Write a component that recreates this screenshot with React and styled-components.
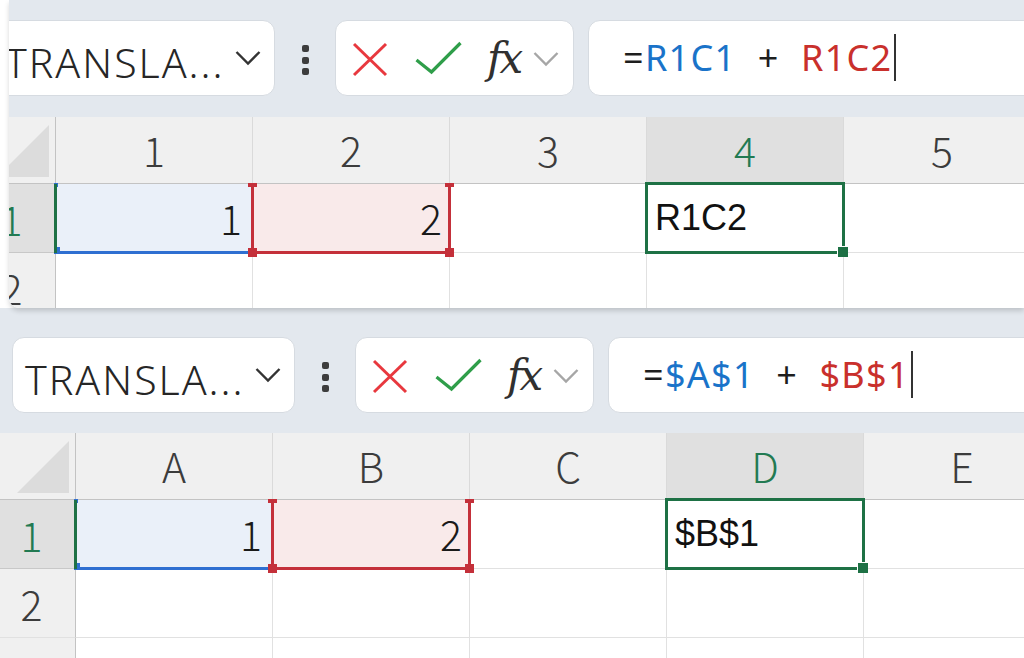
import React from 'react';
import styled, { createGlobalStyle, css } from 'styled-components';

const GlobalStyle = createGlobalStyle`
    html, body {
        margin: 0;
        padding: 0;
        background: #ffffff;
    }
    body {
        width: 1024px;
        height: 658px;
        overflow: hidden;
        font-family: "Noto Sans", "Liberation Sans", sans-serif;
    }
`;

const BAR_BG = '#e3e8ee';
const GRID_LINE = '#e1e1e1';
const HEAD_LINE = '#c3c3c3';
const GREEN = '#1e7145';
const BLUE = '#2f6fd1';
const RED = '#c4303a';

const Page = styled.div`
    width: 1024px;
    height: 658px;
    overflow: hidden;
    display: flex;
    flex-direction: column;
    background: #ffffff;
`;

const Shot = styled.div`
    position: relative;
    flex: none;
    height: ${props => props.$height}px;
    margin-left: ${props => props.$cropLeft}px;
    overflow: hidden;
    background: ${BAR_BG};
    ${props =>
        props.$raised &&
        css`
            z-index: 1;
            border-bottom-left-radius: 10px;
            box-shadow: 0 3px 5px rgba(0, 0, 0, 0.16);
        `}
`;

const Frame = styled.div`
    width: 1140px;
    margin-left: ${props => props.$shift}px;
`;

const Toolbar = styled.div`
    display: flex;
    align-items: center;
    padding: ${props => props.$padTop}px 0 ${props => props.$padBottom}px 12px;
    background: ${BAR_BG};
`;

const Box = styled.div`
    box-sizing: border-box;
    height: 76px;
    background: #ffffff;
    border: 1px solid #d6dbe1;
    border-radius: 12px;
    display: flex;
    align-items: center;
`;

const NameBox = styled(Box)`
    width: 283px;
    flex: none;
    justify-content: space-between;
    padding: 0 13px 0 12px;
`;

const NameText = styled.span`
    font-family: "Noto Sans", sans-serif;
    font-weight: 300;
    font-size: 41px;
    letter-spacing: 2px;
    color: #262626;
    padding-top: 8px;
    white-space: nowrap;
`;

const MoreDots = styled.div`
    width: 60px;
    flex: none;
    display: flex;
    flex-direction: column;
    align-items: center;
    gap: 4.5px;
    padding-top: 4px;
`;

const Dot = styled.span`
    width: 7px;
    height: 7px;
    border-radius: 2px;
    background: #3d3d3d;
`;

const ButtonGroup = styled(Box)`
    width: 239px;
    flex: none;
    padding-left: 16px;
`;

const IconSlot = styled.span`
    display: flex;
    align-items: center;
    margin-right: ${props => props.$gap}px;
    padding-top: ${props => props.$drop || 0}px;
`;

const FxLabel = styled.span`
    font-family: "DejaVu Serif", "Liberation Serif", serif;
    font-style: italic;
    font-size: 42px;
    letter-spacing: -3px;
    color: #303030;
    margin-right: 13px;
    padding-top: 1px;
`;

const FormulaBox = styled(Box)`
    flex: 1;
    margin-left: 14px;
    padding-left: 34px;
    border-top-right-radius: 0;
    border-bottom-right-radius: 0;
`;

const FormulaText = styled.span`
    font-family: "Noto Sans", sans-serif;
    font-weight: 400;
    font-size: 36px;
    letter-spacing: 1.3px;
    white-space: pre;
    color: #1e1e1e;
    padding-top: 2px;
`;

const Ref = styled.span`
    color: ${props => props.$color};
`;

const Caret = styled.span`
    display: inline-block;
    width: 2px;
    height: 47px;
    margin-left: 1px;
    background: #333333;
    vertical-align: middle;
    transform: translateY(-4px);
`;

const Grid = styled.div`
    display: grid;
    grid-template-columns: 76px repeat(5, 197px);
    grid-template-rows: 67px;
    grid-auto-rows: 69px;
    background: #ffffff;
`;

const headFont = css`
    font-family: "Noto Sans CJK JP", "Noto Sans", sans-serif;
    font-weight: 300;
    font-size: 41px;
`;

const Corner = styled.div`
    box-sizing: border-box;
    display: flex;
    align-items: flex-end;
    justify-content: flex-end;
    padding: 0 6px 6px 0;
    background: #f0f0f0;
    border-right: 1px solid ${HEAD_LINE};
    border-bottom: 1px solid ${HEAD_LINE};
`;

const CornerMark = styled.span`
    width: 52px;
    height: 52px;
    background: #dcdcdc;
    clip-path: polygon(100% 0, 100% 100%, 0 100%);
`;

const ColHead = styled.div`
    ${headFont};
    box-sizing: border-box;
    display: flex;
    align-items: center;
    justify-content: center;
    padding-bottom: 2px;
    background: ${props => (props.$active ? '#e0e0e0' : '#f0f0f0')};
    color: ${props => (props.$active ? '#227a52' : '#3c3c3c')};
    border-right: 1px solid #dadada;
    border-bottom: 1px solid ${HEAD_LINE};
`;

const RowHead = styled.div`
    ${headFont};
    position: relative;
    box-sizing: border-box;
    display: flex;
    align-items: center;
    justify-content: center;
    padding-right: 12px;
    background: ${props => (props.$active ? '#e0e0e0' : '#f0f0f0')};
    color: ${props => (props.$active ? '#227a52' : '#3c3c3c')};
    border-right: 1px solid ${HEAD_LINE};
    border-bottom: 1px solid ${props => (props.$active ? '#c8c8c8' : GRID_LINE)};
    ${props =>
        props.$active &&
        css`
            &::after {
                content: '';
                position: absolute;
                z-index: 3;
                top: 0;
                bottom: -1px;
                right: -2px;
                width: 3px;
                background: ${GREEN};
            }
        `}
`;

const Cell = styled.div`
    position: relative;
    box-sizing: border-box;
    display: flex;
    align-items: center;
    justify-content: ${props => (props.$align === 'right' ? 'flex-end' : 'flex-start')};
    padding: 0 ${props => props.$padRight || 0}px 2px ${props => props.$padLeft || 0}px;
    background: ${props => props.$fill || '#ffffff'};
    border-right: 1px solid ${GRID_LINE};
    border-bottom: 1px solid ${GRID_LINE};
    color: #1a1a1a;
`;

const NumValue = styled.span`
    ${headFont};
    color: #1a1a1a;
`;

const TextValue = styled.span`
    font-family: "Liberation Sans", Arial, sans-serif;
    font-size: 36px;
    color: #111111;
    padding-top: 2px;
`;

const RefBox = styled.span`
    position: absolute;
    z-index: 2;
    top: ${props => props.$top}px;
    left: -2px;
    right: -2px;
    bottom: -2px;
    border: 0 solid ${props => props.$color};
    border-width: ${props => props.$edges};
    pointer-events: none;
`;

const Handle = styled.span`
    position: absolute;
    width: ${props => props.$size[0]}px;
    height: ${props => props.$size[1]}px;
    background: ${props => props.$color};
    ${props => props.$at}
`;

const ChevronIcon = ({ color }) => (
    <svg width="26" height="16" viewBox="0 0 26 16">
        <polyline points="1.5,2 13,13.5 24.5,2" fill="none" stroke={color} strokeWidth="2.4" />
    </svg>
);

const CrossIcon = () => (
    <svg width="36" height="35" viewBox="0 0 36 35">
        <line x1="2" y1="2" x2="34" y2="33" stroke="#e8383e" strokeWidth="3" />
        <line x1="34" y1="2" x2="2" y2="33" stroke="#e8383e" strokeWidth="3" />
    </svg>
);

const CheckIcon = () => (
    <svg width="47" height="34" viewBox="0 0 47 34">
        <polyline points="1.5,19 16.5,31 45.5,2" fill="none" stroke="#2f9e4a" strokeWidth="3.2" />
    </svg>
);

function FormulaBar({ name, left, right, padTop, padBottom }) {
    return (
        <Toolbar $padTop={padTop} $padBottom={padBottom}>
            <NameBox>
                <NameText>{name}</NameText>
                <ChevronIcon color="#333333" />
            </NameBox>
            <MoreDots>
                <Dot />
                <Dot />
                <Dot />
            </MoreDots>
            <ButtonGroup>
                <IconSlot $gap={27} $drop={3}>
                    <CrossIcon />
                </IconSlot>
                <IconSlot $gap={25}>
                    <CheckIcon />
                </IconSlot>
                <FxLabel>fx</FxLabel>
                <IconSlot $gap={0} $drop={2}>
                    <ChevronIcon color="#a6a6a6" />
                </IconSlot>
            </ButtonGroup>
            <FormulaBox>
                <FormulaText>
                    =<Ref $color="#1a73c9">{left}</Ref>
                    {'  +  '}
                    <Ref $color="#c9302c">{right}</Ref>
                    <Caret />
                </FormulaText>
            </FormulaBox>
        </Toolbar>
    );
}

function Sheet({ columns, result }) {
    return (
        <Grid>
            <Corner>
                <CornerMark />
            </Corner>
            {columns.map((c, i) => (
                <ColHead key={c} $active={i === 3}>
                    {c}
                </ColHead>
            ))}

            <RowHead $active>1</RowHead>
            <Cell $fill="#eaf0f9" $align="right" $padRight={10}>
                <NumValue>1</NumValue>
                <RefBox $color={BLUE} $top={-1} $edges="0 0 3px 0">
                    <Handle $color={BLUE} $size={[4, 4]} $at="top: 0; left: 0;" />
                    <Handle $color={BLUE} $size={[6, 6]} $at="bottom: -2px; left: 0;" />
                </RefBox>
            </Cell>
            <Cell $fill="#f9eaea" $align="right" $padRight={7}>
                <NumValue>2</NumValue>
                <RefBox $color={RED} $top={-1} $edges="0 3px 3px 3px">
                    <Handle $color={RED} $size={[9, 4]} $at="top: 0; left: -6px;" />
                    <Handle $color={RED} $size={[9, 4]} $at="top: 0; right: -6px;" />
                    <Handle $color={RED} $size={[9, 9]} $at="bottom: -6px; left: -6px;" />
                    <Handle $color={RED} $size={[9, 9]} $at="bottom: -6px; right: -6px;" />
                </RefBox>
            </Cell>
            <Cell />
            <Cell $align="left" $padLeft={8}>
                <TextValue>{result}</TextValue>
                <RefBox $color={GREEN} $top={-2} $edges="3px">
                    <Handle
                        $color={GREEN}
                        $size={[10, 10]}
                        $at="bottom: -6px; right: -6px; box-shadow: -1px -1px 0 #ffffff;"
                    />
                </RefBox>
            </Cell>
            <Cell />

            {[2, 3].map(r => (
                <React.Fragment key={r}>
                    <RowHead>{r}</RowHead>
                    {columns.map(c => (
                        <Cell key={c} />
                    ))}
                </React.Fragment>
            ))}
        </Grid>
    );
}

function App() {
    return (
        <Page>
            <GlobalStyle />
            <Shot $height={308} $cropLeft={9} $raised>
                <Frame $shift={-29}>
                    <FormulaBar name="TRANSLA..." left="R1C1" right="R1C2" padTop={20} padBottom={21} />
                    <Sheet columns={['1', '2', '3', '4', '5']} result="R1C2" />
                </Frame>
            </Shot>
            <Shot $height={350} $cropLeft={0}>
                <Frame $shift={0}>
                    <FormulaBar name="TRANSLA..." left="$A$1" right="$B$1" padTop={29} padBottom={20} />
                    <Sheet columns={['A', 'B', 'C', 'D', 'E']} result="$B$1" />
                </Frame>
            </Shot>
        </Page>
    );
}

export default App;
